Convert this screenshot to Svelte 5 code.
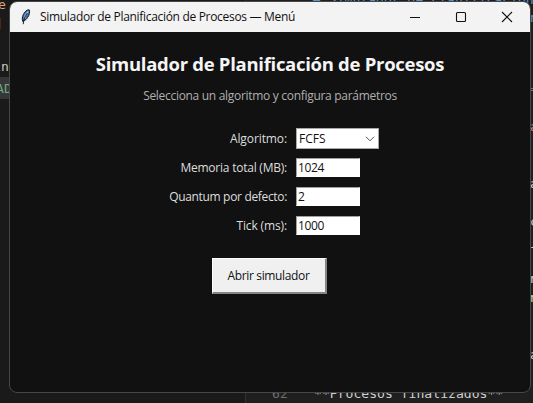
<script>
  const fields = [
    { label: 'Memoria total (MB):', value: '1024', spacing: -0.23 },
    { label: 'Quantum por defecto:', value: '2', spacing: -0.33 },
    { label: 'Tick (ms):', value: '1000', spacing: -0.13 }
  ];

  const fragments = [
    { text: 'e', x: -2, y: -4, color: '#d6a27c' },
    { text: ']', x: -5, y: 15, color: '#ce9178' },
    { text: 'in.', x: -7, y: 58, color: '#c8c8bc' },
    { text: 'AD', x: -4, y: 80, color: '#6fa878' },
    { text: '# Simulador de Planificacion', x: 313, y: -9, color: '#5795cf' },
    { text: 'n', x: 530, y: 9, color: '#5795cf' },
    { text: '=', x: 530, y: 80, color: '#59815a' },
    { text: 'a', x: 530, y: 118, color: '#c58b7a' },
    { text: 'a', x: 530, y: 175, color: '#d8d8b4' },
    { text: 'c', x: 530, y: 213, color: '#c8c8c8' },
    { text: '-', x: 529, y: 238, color: '#d8d8b4' },
    { text: 'n', x: 530, y: 270, color: '#c8d4d4' },
    { text: 'n', x: 530, y: 289, color: '#d8d8b4' },
    { text: 'a', x: 530, y: 346, color: '#d8d8b4' },
    { text: '62', x: 272, y: 385, color: '#6c6e72' },
    { text: '**Procesos finalizados**', x: 314, y: 385, color: '#d0d0d0' }
  ];
</script>

<div class="desktop">
  <div class="selection"></div>
  <div class="panel"></div>
  {#each fragments as f}
    <span class="code" style="left: {f.x}px; top: {f.y}px; color: {f.color}">{f.text}</span>
  {/each}

  <main class="window">
    <header>
      <svg class="feather" width="12" height="18" viewBox="0 0 12 18">
        <path d="M2.8 13.5C1.6 10.5 2.6 6.8 4.8 4.2 6.4 2.4 8 1.6 9.3 1.9c.7 2.3 0 5.2-1.7 7.6-1.1 1.7-2.4 2.8-3.6 3.3z" fill="#4672ac" stroke="#10182c" stroke-width="1" />
        <path d="M8.2 3.4C6 5.5 4.8 8 4.3 10.8" fill="none" stroke="#a9c9ed" stroke-width="1.4" />
        <path d="M7.4 5C5 8 3.6 11.5 3.2 16.2" fill="none" stroke="#10131c" stroke-width=".9" />
      </svg>
      <span class="caption">Simulador de Planificación de Procesos — Menú</span>
      <div class="controls">
        <svg width="12" height="12" viewBox="0 0 12 12"><path d="M1 6.5h10" /></svg>
        <svg width="12" height="12" viewBox="0 0 12 12"><rect x="1.5" y="1.5" width="9" height="9" rx="1" /></svg>
        <svg width="12" height="12" viewBox="0 0 12 12"><path d="M1 1l10 10M11 1L1 11" /></svg>
      </div>
    </header>

    <h1>Simulador de Planificación de Procesos</h1>
    <p>Selecciona un algoritmo y configura parámetros</p>

    <div class="form">
      <div class="row">
        <span class="label algorithm">Algoritmo:</span>
        <div class="combo">
          <span>FCFS</span>
          <svg width="10" height="6" viewBox="0 0 10 6"><path d="M1 .8l4 4 4-4" /></svg>
        </div>
      </div>
      {#each fields as field}
        <div class="row">
          <span class="label" style="letter-spacing: {field.spacing}px">{field.label}</span>
          <div class="entry">{field.value}</div>
        </div>
      {/each}
    </div>

    <button>Abrir simulador</button>
  </main>
</div>

<style>
  :global(body) {
    margin: 0;
    overflow: hidden;
    background: #1a1a1a;
  }
  .desktop {
    position: relative;
    box-sizing: border-box;
    width: 533px;
    height: 403px;
    padding: 1px 0 0 9px;
    overflow: hidden;
    background: #1a1a1a;
    font: 12px/16px "Open Sans", "Noto Sans", sans-serif;
  }
  .selection {
    position: absolute;
    left: 0;
    top: 77px;
    width: 10px;
    height: 22px;
    background: #35363a;
  }
  .panel {
    position: absolute;
    left: 245px;
    top: 0;
    width: 288px;
    height: 403px;
    box-sizing: border-box;
    border-left: 1px solid #303030;
    background: #1f1f1f;
  }
  .code {
    position: absolute;
    font: 13.1px/18px "DejaVu Sans Mono", monospace;
    white-space: pre;
  }
  .window {
    position: relative;
    box-sizing: border-box;
    width: 522px;
    height: 392px;
    display: flex;
    flex-direction: column;
    align-items: center;
    border: 1px solid #474747;
    border-radius: 8px;
    overflow: hidden;
    background: #111;
  }
  header {
    box-sizing: border-box;
    width: 100%;
    height: 30px;
    flex: none;
    display: flex;
    align-items: center;
    padding: 0 17px 0 10px;
    background: #f3f3f3;
    color: #111;
  }
  .feather {
    margin-right: 8px;
  }
  .caption {
    font-size: 12px;
    letter-spacing: -0.31px;
    white-space: nowrap;
  }
  .controls {
    margin-left: auto;
    display: flex;
    gap: 34px;
  }
  .controls svg {
    fill: none;
    stroke: #111;
    stroke-width: 1.1;
  }
  h1 {
    margin: 20px 0 0;
    font-size: 18.5px;
    line-height: 24px;
    font-weight: 700;
    letter-spacing: -0.29px;
    color: #f5f5f5;
    white-space: nowrap;
  }
  p {
    margin: 12px 0 0;
    color: #b0b0b0;
    letter-spacing: -0.3px;
    white-space: nowrap;
  }
  .form {
    width: 100%;
    margin-top: 20px;
    display: flex;
    flex-direction: column;
  }
  .row {
    height: 29px;
    display: flex;
    align-items: center;
  }
  .label {
    width: 277px;
    margin-right: 9px;
    text-align: right;
    color: #dedede;
    white-space: nowrap;
  }
  .algorithm {
    letter-spacing: -0.1px;
  }
  .combo {
    box-sizing: border-box;
    width: 83px;
    height: 21px;
    display: flex;
    align-items: center;
    justify-content: space-between;
    padding: 0 3px 0 2px;
    border: 1px solid #a8a8a8;
    background: #fff;
    color: #111;
  }
  .combo svg {
    fill: none;
    stroke: #555;
    stroke-width: 1;
  }
  .entry {
    box-sizing: border-box;
    width: 64px;
    height: 19px;
    padding-left: 1px;
    border: 1px solid #fff;
    border-top-color: #a0a0a0;
    border-left-color: #a0a0a0;
    background: #fff;
    color: #111;
    line-height: 17px;
    letter-spacing: -0.4px;
  }
  button {
    box-sizing: border-box;
    width: 115px;
    height: 36px;
    margin: 18px 2px 0 0;
    padding: 0;
    border: 1px solid #fff;
    border-right: 2px solid #858585;
    border-bottom: 2px solid #858585;
    border-radius: 0;
    background: #f0f0f0;
    color: #111;
    font: inherit;
    letter-spacing: -0.35px;
  }
</style>
